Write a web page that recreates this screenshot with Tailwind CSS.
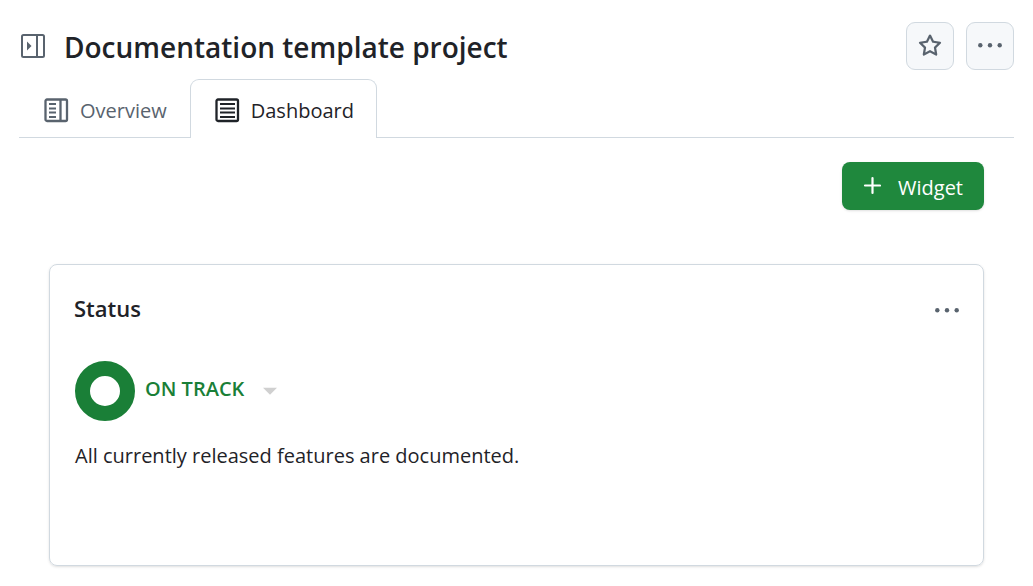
<!DOCTYPE html>
<html lang="en">
<head>
    <meta charset="UTF-8" />
    <meta name="viewport" content="width=device-width, initial-scale=1.0" />
    <title>Documentation template project</title>
    <script src="https://cdn.jsdelivr.net/npm/@tailwindcss/browser@4"></script>
</head>
<body class="bg-white text-[#1f2328] font-['Segoe_UI','Open_Sans','Noto_Sans',sans-serif] text-[20px] leading-[28px]">
    <div class="px-[19px] pt-[22px] pb-[20px]">
        <header class="flex items-center justify-between">
            <div class="flex items-center gap-[17px]">
                <button type="button" aria-label="Toggle sidebar" class="text-[#59636e]">
                    <svg class="block w-[28px] h-[28px]" viewBox="0 0 28 28" fill="none" stroke="currentColor" stroke-width="2">
                        <rect x="3" y="3" width="22" height="22" rx="1.5" />
                        <path d="M18 3v22" />
                        <path d="M8 9.5v9l4.5-4.5z" fill="currentColor" stroke="none" />
                    </svg>
                </button>
                <h1 class="pt-[2px] text-[28px] leading-[36px] font-semibold">Documentation template project</h1>
            </div>
            <div class="flex gap-3">
                <button type="button" aria-label="Add to favorites" class="flex size-[48px] items-center justify-center rounded-[9px] border border-[#d1d9e0] bg-[#f6f8fa] text-[#59636e]">
                    <svg class="w-[24px] h-[24px]" viewBox="0 0 16 16" fill="currentColor">
                        <path d="M8 .25a.75.75 0 0 1 .673.418l1.882 3.815 4.21.612a.75.75 0 0 1 .416 1.279l-3.046 2.97.719 4.192a.751.751 0 0 1-1.088.791L8 12.347l-3.766 1.98a.75.75 0 0 1-1.088-.79l.72-4.194L.818 6.374a.75.75 0 0 1 .416-1.28l4.21-.611L7.327.668A.75.75 0 0 1 8 .25Zm0 2.445L6.615 5.5a.75.75 0 0 1-.564.41l-3.097.45 2.24 2.184a.75.75 0 0 1 .216.664l-.528 3.084 2.769-1.456a.75.75 0 0 1 .698 0l2.77 1.456-.53-3.084a.75.75 0 0 1 .216-.664l2.24-2.183-3.096-.45a.75.75 0 0 1-.564-.41L8 2.694Z" />
                    </svg>
                </button>
                <button type="button" aria-label="More actions" class="flex size-[48px] items-center justify-center rounded-[9px] border border-[#d1d9e0] bg-[#f6f8fa] text-[#59636e]">
                    <svg class="w-[26px] h-[24px]" viewBox="0 0 26 24" fill="currentColor">
                        <circle cx="3.3" cy="11.3" r="2.2" />
                        <circle cx="13" cy="11.3" r="2.2" />
                        <circle cx="22.7" cy="11.3" r="2.2" />
                    </svg>
                </button>
            </div>
        </header>

        <nav class="mt-[9px] flex border-b border-[#d1d9e0]">
            <a href="#overview" class="-mb-px flex h-[59px] items-center gap-[11px] border border-transparent pt-[2px] pl-6 pr-[22px] text-[#59636e]">
                <svg class="w-[25px] h-[26px]" viewBox="0 0 25 26" fill="none" stroke="currentColor" stroke-width="2.3">
                    <rect x="1.5" y="2.5" width="21.5" height="21.5" rx="1.5" />
                    <path d="M16.5 2.5v21.5" />
                    <path d="M5 7h7M5 11.5h7M5 15.5h7M5 20h7" stroke-width="2" />
                </svg>
                <span class="pt-[2px]">Overview</span>
            </a>
            <a href="#dashboard" aria-current="page" class="-mb-px flex h-[59px] items-center gap-[11px] rounded-t-[9px] border border-b-0 border-[#d1d9e0] bg-white pt-[2px] pl-6 pr-[22px]">
                <svg class="w-[25px] h-[26px]" viewBox="0 0 25 26" fill="none" stroke="currentColor" stroke-width="2.3">
                    <rect x="1.5" y="2.5" width="21.5" height="21.5" rx="1.5" />
                    <path d="M5 7h15M5 11.5h15M5 15.5h15M5 20h15" stroke-width="2" />
                </svg>
                <span class="pt-[2px]">Dashboard</span>
            </a>
        </nav>

        <main class="px-[30px] pt-6">
            <div class="flex justify-end">
                <button type="button" class="flex h-[48px] items-center gap-[17px] rounded-[8px] bg-[#1f883d] px-[21px] text-white shadow-sm">
                    <svg class="w-[18px] h-[20px]" viewBox="0 0 18 20" stroke="currentColor" stroke-width="2.2" stroke-linecap="round">
                        <path d="M9.5 2v15M2 9.5h15" />
                    </svg>
                    <span class="pt-[3px]">Widget</span>
                </button>
            </div>

            <section class="mt-[54px] min-h-[302px] rounded-[8px] border border-[#d1d9e0] px-6 pt-[29px] pb-6 shadow-sm">
                <div class="flex items-center justify-between">
                    <h2 class="text-[22px] font-semibold">Status</h2>
                    <button type="button" aria-label="Status widget actions" class="text-[#59636e]">
                        <svg class="block w-[26px] h-[24px]" viewBox="0 0 26 24" fill="currentColor">
                            <circle cx="4.3" cy="14.3" r="2.2" />
                            <circle cx="14" cy="14.3" r="2.2" />
                            <circle cx="23.7" cy="14.3" r="2.2" />
                        </svg>
                    </button>
                </div>
                <button type="button" class="mt-[39px] ml-px flex items-center gap-[10px] font-semibold text-[#1a7f37]">
                    <span class="size-[60px] rounded-full border-[15px] border-current"></span>
                    <span class="pb-1">ON TRACK</span>
                    <svg class="ml-2 w-[16px] h-[8px] text-[#d0d0d0]" viewBox="0 0 16 8" fill="currentColor">
                        <path d="M1 .8h14L8 7.8z" />
                    </svg>
                </button>
                <p class="mt-[21px] ml-px">All currently released features are documented.</p>
            </section>
        </main>
    </div>
</body>
</html>
